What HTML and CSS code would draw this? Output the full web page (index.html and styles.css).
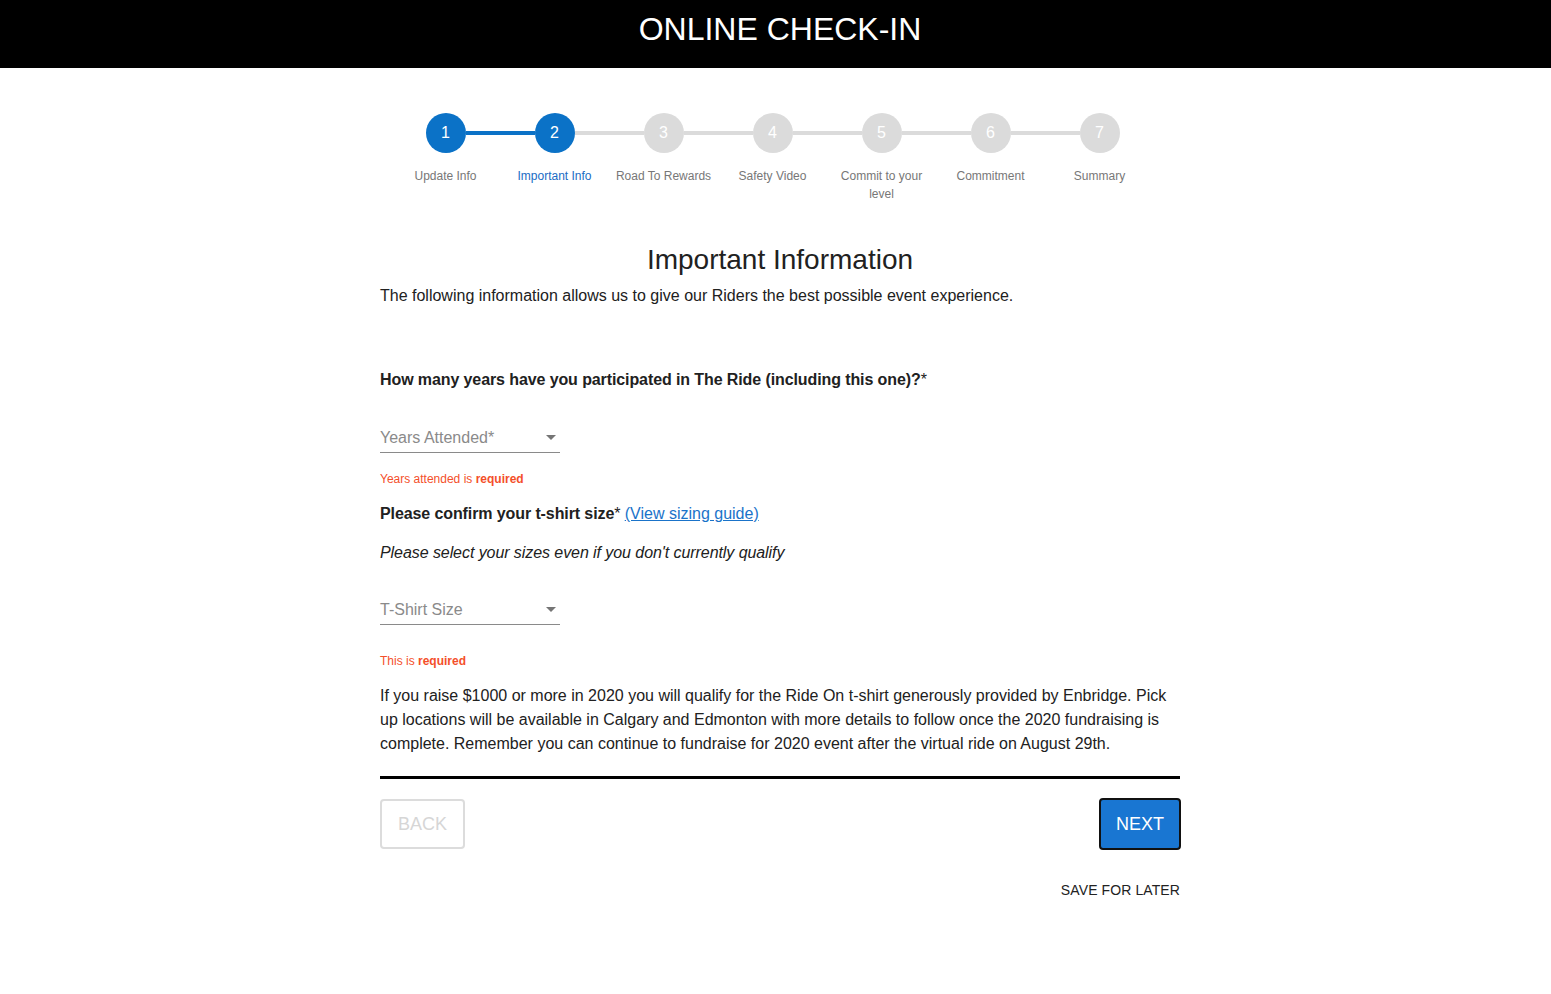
FILE: index.html
```html
<!DOCTYPE html>
<html>
<head>
<meta charset="utf-8">
<link rel="stylesheet" href="styles.css">
</head>
<body>
<header class="topbar"><span class="topbar-text">ONLINE CHECK-IN</span></header>
<div class="page">
<main class="wrap">
  <ol class="stepper">
    <li class="step done"><span class="dot">1</span><span class="lbl">Update Info</span></li>
    <li class="step active"><span class="dot">2</span><span class="lbl">Important Info</span></li>
    <li class="step"><span class="dot">3</span><span class="lbl">Road To Rewards</span></li>
    <li class="step"><span class="dot">4</span><span class="lbl">Safety Video</span></li>
    <li class="step"><span class="dot">5</span><span class="lbl">Commit to your<br>level</span></li>
    <li class="step"><span class="dot">6</span><span class="lbl">Commitment</span></li>
    <li class="step"><span class="dot">7</span><span class="lbl">Summary</span></li>
  </ol>

  <h1 class="title">Important Information</h1>
  <p class="intro">The following information allows us to give our Riders the best possible event experience.</p>

  <p class="question">How many years have you participated in The Ride (including this one)?<span class="ast">*</span></p>
  <div class="select s1"><span class="ph">Years Attended*</span><span class="caret"></span></div>
  <p class="err e1">Years attended is <b>required</b></p>

  <p class="question q2">Please confirm your t-shirt size<span class="ast">*</span> <a class="link" href="#">(View sizing guide)</a></p>
  <p class="note">Please select your sizes even if you don't currently qualify</p>
  <div class="select s2"><span class="ph">T-Shirt Size</span><span class="caret"></span></div>
  <p class="err e2">This is <b>required</b></p>

  <p class="body">If you raise $1000 or more in 2020 you will qualify for the Ride On t-shirt generously provided by Enbridge. Pick up locations will be available in Calgary and Edmonton with more details to follow once the 2020 fundraising is complete. Remember you can continue to fundraise for 2020 event after the virtual ride on August 29th.</p>

  <div class="rule"></div>
  <div class="actions">
    <button class="btn back">BACK</button>
    <button class="btn next">NEXT</button>
  </div>
  <div class="save">SAVE FOR LATER</div>
</main>
</div>
</body>
</html>
```
FILE: styles.css
```css
* { box-sizing: border-box; }
html, body { margin: 0; padding: 0; background: #fff; }
body { font-family: "Liberation Sans", Arial, sans-serif; color: #212121; }

.topbar {
  height: 68px;
  background: #000;
  color: #fff;
  font-size: 32px;
  line-height: 58px;
  text-align: center;
  padding-left: 9px;
}

.page { padding-left: 9px; }
.wrap { width: 800px; margin: 0 auto; }

.stepper {
  list-style: none;
  margin: 45px 0 0 11px;
  padding: 0;
  display: flex;
}
.step {
  width: 109px;
  display: flex;
  flex-direction: column;
  align-items: center;
  position: relative;
}
.step + .step::before {
  content: "";
  position: absolute;
  top: 18px;
  height: 4px;
  left: calc(-50% + 20px);
  right: calc(50% + 20px);
  background: #dbdbdb;
}
.step.active::before { background: #0b72c7; }
.dot {
  width: 40px; height: 40px;
  border-radius: 50%;
  background: #dbdbdb;
  color: #fff;
  font-size: 16px;
  line-height: 40px;
  text-align: center;
}
.done .dot, .active .dot { background: #0b72c7; }
.lbl {
  margin-top: 14px;
  font-size: 12px;
  line-height: 18px;
  color: #777;
  text-align: center;
  white-space: nowrap;
}
.active .lbl { color: #1a6cc4; }

.title {
  margin: 39px 0 0;
  font-size: 28px;
  font-weight: 400;
  line-height: 36px;
  text-align: center;
  color: #212121;
}
.intro { margin: 6px 0 0; font-size: 16px; line-height: 24px; }

.question { margin: 60px 0 0; font-size: 16px; font-weight: 700; line-height: 24px; letter-spacing: -0.1px; }
.ast { font-weight: 400; }
.question.q2 { margin-top: 13px; }
.link { color: #1a73c9; font-weight: 400; text-decoration: underline; letter-spacing: 0; }

.select {
  width: 180px;
  height: 31px;
  border-bottom: 1px solid #8a8a8a;
  display: flex;
  align-items: center;
  justify-content: space-between;
  padding-right: 4px;
  padding-top: 1px;
}
.s1 { margin-top: 30px; }
.s2 { margin-top: 29px; }
.ph { font-size: 16px; color: #8a8a8a; }
.caret {
  width: 0; height: 0;
  border-left: 5px solid transparent;
  border-right: 5px solid transparent;
  border-top: 5px solid #757575;
}

.err { margin: 16px 0 0; font-size: 12px; line-height: 20px; color: #f44f2a; }
.err b { font-weight: 700; }
.e2 { margin-top: 26px; }

.note { margin: 15px 0 0; font-style: italic; font-size: 16px; line-height: 24px; letter-spacing: -0.07px; }

.body { margin: 13px 0 0; font-size: 16px; line-height: 24px; }

.rule { margin-top: 20px; height: 3px; background: #000; }

.actions {
  margin-top: 19px;
  display: flex;
  justify-content: space-between;
  align-items: center;
}
.btn {
  font-family: "Liberation Sans", Arial, sans-serif;
  font-size: 18px;
  border-radius: 4px;
  cursor: pointer;
}
.back {
  width: 85px; height: 50px;
  background: #fff;
  border: 2px solid #dcdcdc;
  color: #d6d6d6;
}
.next {
  width: 82px; height: 52px;
  margin-right: -1px;
  background: #1976d2;
  border: 2px solid #111;
  color: #fff;
}

.save {
  margin-top: 32px;
  text-align: right;
  font-size: 14px;
  color: #222;
  letter-spacing: 0.1px;
}
```
